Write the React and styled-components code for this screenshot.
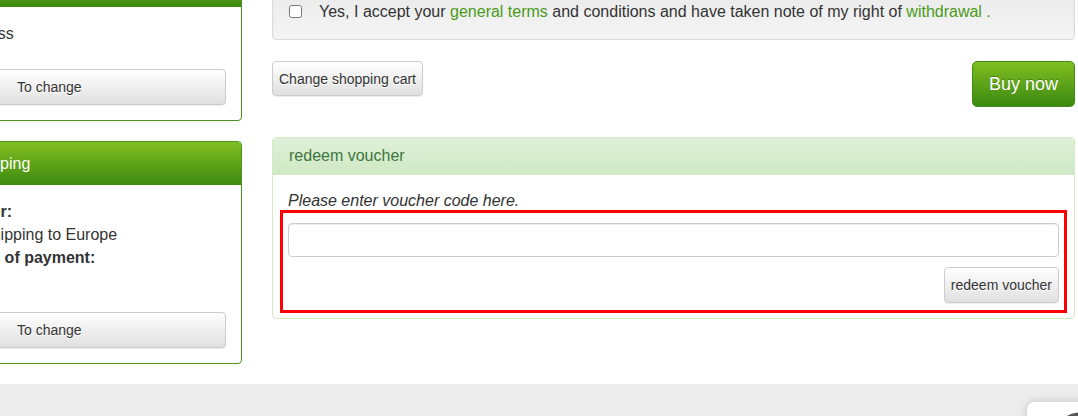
import React, { useState } from 'react';
import styled, { createGlobalStyle } from 'styled-components';

const GlobalStyle = createGlobalStyle`
  html, body {
    margin: 0;
    padding: 0;
    overflow: hidden;
    background: #fff;
  }
  body {
    font-family: "Liberation Sans", Arial, sans-serif;
    font-size: 16px;
    line-height: 1.42857;
    color: #333;
  }
  * {
    box-sizing: border-box;
  }
`;

const Page = styled.div`
  width: 1078px;
  height: 416px;
  overflow: hidden;
  display: flex;
  flex-direction: column;
`;

const Main = styled.div`
  display: flex;
  align-items: flex-start;
  gap: 30px;
  margin-left: -52px;
`;

const Sidebar = styled.aside`
  width: 294px;
  flex: none;
  margin-top: -37px;
  display: flex;
  flex-direction: column;
  gap: 20px;
`;

const Content = styled.section`
  width: 803px;
  flex: none;
  margin-top: -20px;
`;

const BoxPanel = styled.div`
  border: 1px solid #4b9420;
  border-radius: 4px;
  background: #fff;
  overflow: hidden;
`;

const BoxHeading = styled.div`
  padding: 10px 15px 10px 19px;
  line-height: 23px;
  color: #fff;
  background: linear-gradient(to bottom, #82bd21 0%, #3d8a11 100%);
`;

const BoxBody = styled.div`
  padding: 15px;
`;

const Line = styled.div`
  min-height: 23px;
  line-height: 23px;
`;

const Label = styled.dt`
  font-weight: bold;
  line-height: 23px;
`;

const Value = styled.dd`
  margin: 0 0 0 17px;
  min-height: 23px;
  line-height: 23px;
`;

const Details = styled.dl`
  margin: 0;
`;

const Button = styled.button`
  display: inline-flex;
  align-items: center;
  justify-content: ${(p) => (p.$block ? 'flex-start' : 'center')};
  width: ${(p) => (p.$block ? '100%' : 'auto')};
  height: ${(p) => p.$height || 36}px;
  margin-top: ${(p) => p.$top || 0}px;
  padding: ${(p) => (p.$block ? '0 0 0 52px' : '0 6px')};
  font-family: inherit;
  font-size: 14px;
  color: #333;
  text-shadow: 0 1px 0 #fff;
  background: linear-gradient(to bottom, #fff 0%, #e0e0e0 100%);
  border: 1px solid #ccc;
  border-radius: 4px;
  box-shadow: inset 0 1px 0 rgba(255, 255, 255, 0.15), 0 1px 1px rgba(0, 0, 0, 0.075);
  cursor: pointer;
`;

const BuyButton = styled.button`
  height: 46px;
  padding: 0 16px;
  font-family: inherit;
  font-size: 18px;
  color: #fff;
  text-shadow: 0 -1px 0 rgba(0, 0, 0, 0.25);
  background: linear-gradient(to bottom, #80bd20 0%, #3b8a12 100%);
  border: 1px solid #3f8d15;
  border-radius: 5px;
  cursor: pointer;
`;

const Well = styled.div`
  padding: 19px 16px 16px;
  border: 1px solid #dcdcdc;
  border-radius: 4px;
  background: linear-gradient(to bottom, #e8e8e8 0%, #f5f5f5 100%);
  box-shadow: inset 0 1px 3px rgba(0, 0, 0, 0.05);
`;

const TermsLabel = styled.label`
  display: flex;
  align-items: flex-start;
  gap: 17px;
  line-height: 23px;

  input {
    width: 13px;
    height: 13px;
    margin: 5px 0 0;
    flex: none;
  }
`;

const Link = styled.a`
  color: #4b9a19;
  text-decoration: none;
`;

const Actions = styled.div`
  display: flex;
  justify-content: space-between;
  align-items: flex-start;
  margin-top: 21px;
`;

const VoucherPanel = styled.div`
  margin-top: 30px;
  border: 1px solid #d6e9c6;
  border-radius: 4px;
`;

const VoucherHeading = styled.div`
  padding: 7px 16px;
  line-height: 22px;
  color: #3c763d;
  background: linear-gradient(to bottom, #dff0d8 0%, #d0e9c6 100%);
  border-bottom: 1px solid #d6e9c6;
  border-radius: 3px 3px 0 0;
`;

const VoucherBody = styled.div`
  padding: 14px 15px 15px;
`;

const Hint = styled.p`
  margin: 0 0 11px;
  font-style: italic;
  line-height: 23px;
`;

const Marked = styled.div`
  position: relative;
  display: flex;
  flex-direction: column;
  align-items: flex-end;
  gap: 10px;

  &::after {
    content: '';
    position: absolute;
    top: -13px;
    left: -8px;
    right: -8px;
    bottom: -10px;
    border: 3px solid #ff0000;
    pointer-events: none;
  }
`;

const CodeInput = styled.input`
  width: 100%;
  height: 34px;
  padding: 6px 12px;
  font-family: inherit;
  font-size: 14px;
  color: #555;
  border: 1px solid #ccc;
  border-radius: 4px;
  box-shadow: inset 0 1px 1px rgba(0, 0, 0, 0.075);
  outline: none;
`;

const Footer = styled.footer`
  position: relative;
  flex: 1;
  margin-top: 20px;
  background: #ececec;
`;

const Badge = styled.div`
  position: absolute;
  left: 1027px;
  top: 18px;
  width: 70px;
  height: 60px;
  background: #fff;
  border-radius: 8px;
  box-shadow: 0 0 8px rgba(0, 0, 0, 0.18);
  overflow: hidden;

  svg {
    position: absolute;
    left: 30px;
    top: 5px;
  }
`;

function App() {
  const [code, setCode] = useState('');
  const [accepted, setAccepted] = useState(false);

  return (
    <Page>
      <GlobalStyle />
      <Main>
        <Sidebar>
          <BoxPanel>
            <BoxHeading>Delivery address</BoxHeading>
            <BoxBody>
              <Line>Adress</Line>
              <Button $block $top={24}>To change</Button>
            </BoxBody>
          </BoxPanel>
          <BoxPanel>
            <BoxHeading>Shipping</BoxHeading>
            <BoxBody>
              <Details>
                <Label>Other:</Label>
                <Value>Shipping to Europe</Value>
                <Label>Type of payment:</Label>
                <Value>&nbsp;</Value>
              </Details>
              <Button $block $top={20}>To change</Button>
            </BoxBody>
          </BoxPanel>
        </Sidebar>

        <Content>
          <Well>
            <TermsLabel>
              <input
                type="checkbox"
                checked={accepted}
                onChange={(e) => setAccepted(e.target.checked)}
              />
              <span>
                Yes, I accept your <Link href="#">general terms</Link> and conditions and have
                taken note of my right of <Link href="#">withdrawal .</Link>
              </span>
            </TermsLabel>
          </Well>

          <Actions>
            <Button $height={35}>Change shopping cart</Button>
            <BuyButton>Buy now</BuyButton>
          </Actions>

          <VoucherPanel>
            <VoucherHeading>redeem voucher</VoucherHeading>
            <VoucherBody>
              <Hint>Please enter voucher code here.</Hint>
              <Marked>
                <CodeInput value={code} onChange={(e) => setCode(e.target.value)} />
                <Button>redeem voucher</Button>
              </Marked>
            </VoucherBody>
          </VoucherPanel>
        </Content>
      </Main>

      <Footer>
        <Badge>
          <svg width="40" height="30" viewBox="0 0 40 30">
            <path d="M6 12 C12 6, 22 4, 34 6 L34 9 C24 8, 14 9, 8 14 Z" fill="#555" />
          </svg>
        </Badge>
      </Footer>
    </Page>
  );
}

export default App;
